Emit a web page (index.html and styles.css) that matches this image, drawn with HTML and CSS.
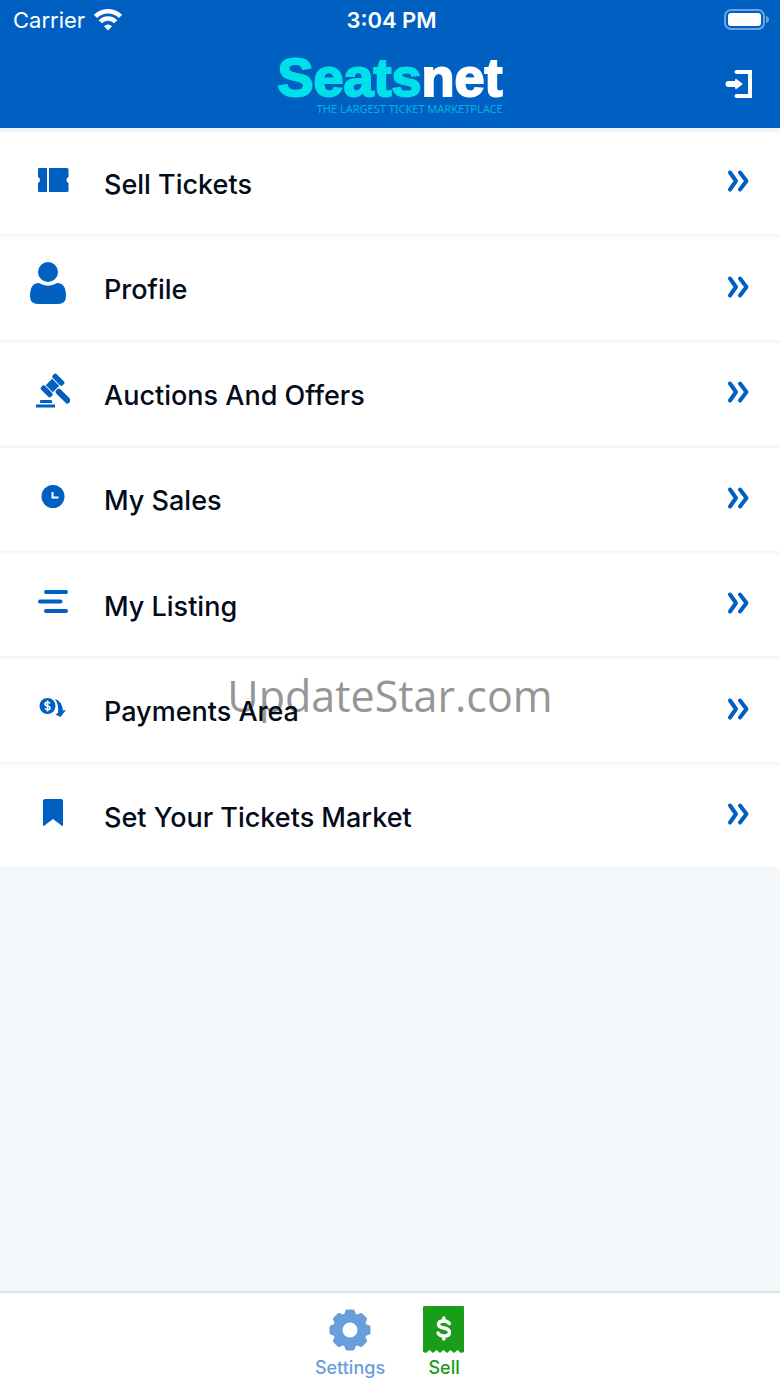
FILE: index.html
```html
<!DOCTYPE html>
<html lang="en">

<head>
    <meta charset="UTF-8">
    <meta name="viewport" content="width=device-width, initial-scale=1.0">
    <title>Seatsnet</title>
    <link rel="stylesheet" href="styles.css">
</head>

<body>
    <!-- shared arrow for the menu rows -->
    <svg class="defs" width="0" height="0">
        <symbol id="arrow" viewBox="0 0 24 24">
            <path d="M4 3.500 L10 12 L4 20.500 M14 3.500 L20.500 12 L14 20.500" fill="none" stroke="currentColor" stroke-width="4" stroke-linecap="round" stroke-linejoin="round"/>
        </symbol>
    </svg>

    <header class="header">
        <div class="status">
            <div class="carrier">
                <span>Carrier</span>
                <svg width="28" height="22" viewBox="0 0 28 22" fill="none" stroke="#fff" stroke-width="4.500">
                    <path d="M1.500 7.500 A17.500 17.500 0 0 1 26.500 7.500"/>
                    <path d="M6.300 12.700 A10.600 10.600 0 0 1 21.700 12.700"/>
                    <path d="M14 21.500 L10 17.200 A5.600 5.600 0 0 1 18 17.200 Z" fill="#fff" stroke="none"/>
                </svg>
            </div>
            <div class="time">3:04 PM</div>
            <div class="battery">
                <svg width="46" height="22" viewBox="0 0 46 22">
                    <rect x="1" y="1" width="39" height="19" rx="6" fill="none" stroke="#6ba3de" stroke-width="2"/>
                    <rect x="4" y="4" width="33" height="13" rx="3" fill="#fff"/>
                    <path d="M42 7 Q45 8 45 10.500 Q45 13 42 14 Z" fill="#6ba3de"/>
                </svg>
            </div>
        </div>
        <div class="bar">
            <div class="logo">
                <div class="name">Seats<span>net</span></div>
                <div class="slogan">THE LARGEST TICKET MARKETPLACE</div>
            </div>
            <button class="logout" aria-label="Log out">
                <svg width="28" height="30" viewBox="0 0 28 30">
                    <path d="M11.500 3 H25 V27 H11.500" fill="none" stroke="#fff" stroke-width="4" stroke-linecap="round"/>
                    <path d="M3.500 15 H11" stroke="#fff" stroke-width="6" stroke-linecap="round"/>
                    <path d="M11 11 L16.500 15 L11 19 Z" fill="#fff" stroke="#fff" stroke-width="2" stroke-linejoin="round"/>
                </svg>
            </button>
        </div>
    </header>

    <main class="main">
        <ul class="list">
            <li>
                <a href="#">
                    <span class="icon">
                        <svg width="32" height="24" viewBox="0 0 32 24">
                            <path d="M2 0 H10 V24 H2 Q1 24 1 23 V15 A3.200 3.200 0 0 0 1 9 V1 Q1 0 2 0 Z M12 0 H30 Q31.500 0 31.500 1.500 V9 A3.200 3.200 0 0 0 31.500 15 V22.500 Q31.500 24 30 24 H12 Z"/>
                        </svg>
                    </span>
                    <span class="label">Sell Tickets</span>
                    <svg class="arrow"><use href="#arrow"/></svg>
                </a>
            </li>
            <li>
                <a href="#">
                    <span class="icon profile">
                        <svg width="36" height="42" viewBox="0 0 36 42">
                            <circle cx="18" cy="10" r="10"/>
                            <path d="M9 21 Q18 26.500 27 21 Q36 21 36 34 Q36 42 28 42 H8 Q0 42 0 34 Q0 21 9 21 Z"/>
                        </svg>
                    </span>
                    <span class="label">Profile</span>
                    <svg class="arrow"><use href="#arrow"/></svg>
                </a>
            </li>
            <li>
                <a href="#">
                    <span class="icon">
                        <svg width="34" height="36" viewBox="0 0 34 36">
                            <g transform="translate(16.500 12.500) rotate(45)">
                                <rect x="-7" y="-11" width="14" height="5.500" rx="2"/>
                                <rect x="-7" y="5.500" width="14" height="5.500" rx="2"/>
                                <rect x="-5" y="-4.500" width="10" height="9"/>
                                <rect x="6" y="-3" width="18" height="6" rx="2.500"/>
                            </g>
                            <path d="M4 28 Q4 27 5 27 H15 Q16 27 16 28 V30 H4 Z M0 31.500 H19 V34.500 H0 Z"/>
                        </svg>
                    </span>
                    <span class="label">Auctions And Offers</span>
                    <svg class="arrow"><use href="#arrow"/></svg>
                </a>
            </li>
            <li>
                <a href="#">
                    <span class="icon">
                        <svg width="24" height="24" viewBox="0 0 24 24">
                            <circle cx="12" cy="11.500" r="11.500"/>
                            <path d="M11.500 7 V12.500 H17.500" fill="none" stroke="#fff" stroke-width="2"/>
                        </svg>
                    </span>
                    <span class="label">My Sales</span>
                    <svg class="arrow"><use href="#arrow"/></svg>
                </a>
            </li>
            <li>
                <a href="#">
                    <span class="icon">
                        <svg width="30" height="24" viewBox="0 0 30 24">
                            <path d="M8 2 H28 M2 11.500 H22.500 M8 21 H28" stroke="#0060c2" stroke-width="4" stroke-linecap="round"/>
                        </svg>
                    </span>
                    <span class="label">My Listing</span>
                    <svg class="arrow"><use href="#arrow"/></svg>
                </a>
            </li>
            <li>
                <div class="watermark">UpdateStar.com</div>
                <a href="#">
                    <span class="icon">
                        <svg width="28" height="20" viewBox="0 0 28 20">
                            <circle cx="8.500" cy="8" r="8"/>
                            <path d="M11 5.500 Q10 4.300 8.500 4.300 Q6 4.300 6 6 Q6 7.600 8.500 8 Q11 8.400 11 10 Q11 11.700 8.500 11.700 Q7 11.700 6 10.500 M8.500 2.500 V13.500" fill="none" stroke="#fff" stroke-width="1.600"/>
                            <path d="M16 1 Q23 3 24 12.500 L27 12 L21.500 19 L16.500 16.500 L19 15 Q20 7 16 1 Z"/>
                        </svg>
                    </span>
                    <span class="label">Payments Area</span>
                    <svg class="arrow"><use href="#arrow"/></svg>
                </a>
            </li>
            <li>
                <a href="#">
                    <span class="icon">
                        <svg width="20" height="28" viewBox="0 0 20 28">
                            <path d="M2 0 H18 Q20 0 20 2 V26 Q20 27.500 18.500 26.500 L10 20 L1.500 26.500 Q0 27.500 0 26 V2 Q0 0 2 0 Z"/>
                        </svg>
                    </span>
                    <span class="label">Set Your Tickets Market</span>
                    <svg class="arrow"><use href="#arrow"/></svg>
                </a>
            </li>
        </ul>
    </main>

    <nav class="tabs">
        <a href="#" class="tab settings">
            <svg width="42" height="48" viewBox="0 0 42 48">
                <g transform="translate(21 24)" fill="#689edb">
                    <circle r="17"/>
                    <g id="teeth">
                        <path d="M-6.500 -14 L-4.500 -19.500 Q-4 -20.500 -3 -20.500 H3 Q4 -20.500 4.500 -19.500 L6.500 -14 V14 L4.500 19.500 Q4 20.500 3 20.500 H-3 Q-4 20.500 -4.500 19.500 L-6.500 14 Z"/>
                    </g>
                    <use href="#teeth" transform="rotate(45)"/>
                    <use href="#teeth" transform="rotate(90)"/>
                    <use href="#teeth" transform="rotate(135)"/>
                    <circle r="7.500" fill="#fff"/>
                </g>
            </svg>
            <span>Settings</span>
        </a>
        <a href="#" class="tab sell">
            <svg width="42" height="48" viewBox="0 0 42 48">
                <path d="M2 0 H40 Q41 0 41 1 V46 L38 47 L34.500 44 L31 47 L27.500 44 L24 47 L20.500 44 L17 47 L13.500 44 L10 47 L6.500 44 L3 47 L0 46 V1 Q0 0 2 0 Z" fill="#199e19"/>
                <path d="M26.300 17.500 Q24.500 15 20.800 15 Q15.500 15 15.500 18.500 Q15.500 21 20.800 22 Q26.500 23 26.500 26.500 Q26.500 30 20.800 30 Q16.500 30 15 27 M20.800 12 V15 M20.800 30 V33" fill="none" stroke="#fff" stroke-width="3.500" stroke-linecap="round"/>
            </svg>
            <span>Sell</span>
        </a>
    </nav>
</body>

</html>
```
FILE: styles.css
```css
* {
    margin: 0;
    padding: 0;
    box-sizing: border-box;
    list-style: none;
}

body {
    min-height: 100vh;
    display: flex;
    flex-direction: column;
    background: #f4f8fb;
    font-family: Inter, "Liberation Sans", sans-serif;
}

a {
    text-decoration: none;
}

svg {
    display: block;
}

.defs {
    position: absolute;
}

.header {
    background: #0060c2;
    color: #fff;
    border-bottom: 4px solid #edf6fd;
}

.status {
    height: 40px;
    padding: 0 10px 0 13px;
    display: grid;
    grid-template-columns: 1fr auto 1fr;
    align-items: center;
    font-size: 22px;
}

.carrier {
    display: flex;
    align-items: center;
    gap: 9px;
}

.time {
    font-weight: 600;
}

.battery {
    justify-self: end;
}

.bar {
    height: 88px;
    padding: 0 27px;
    display: grid;
    grid-template-columns: 1fr auto 1fr;
    align-items: center;
}

.logo {
    grid-column: 2;
    text-align: right;
}

.name {
    font: bold 54px/50px "Liberation Sans", sans-serif;
    color: #00e0ea;
    -webkit-text-stroke: 2px currentColor;
}

.name span {
    color: #fff;
}

.slogan {
    font: 11px/14px "Noto Sans", sans-serif;
    color: #00b4e0;
}

.logout {
    justify-self: end;
    border: 0;
    background: none;
}

.list {
    display: flex;
    flex-direction: column;
    gap: 3px;
}

.list li {
    position: relative;
    height: 102px;
    background: #fff;
}

.list li:nth-child(even) {
    height: 103px;
}

.list a {
    position: relative;
    height: 100%;
    padding: 0 30px;
    display: flex;
    align-items: center;
    color: #0060c2;
}

.icon {
    width: 46px;
    margin-bottom: 6px;
    display: flex;
    justify-content: center;
    fill: currentColor;
}

.profile {
    justify-content: flex-start;
    margin-bottom: 12px;
}

.label {
    flex: 1;
    margin-left: 28px;
    padding-top: 2px;
    font-size: 27px;
    font-weight: 500;
    color: #020b18;
}

.arrow {
    width: 24px;
    height: 24px;
    margin-bottom: 4px;
}

.watermark {
    position: absolute;
    inset: 0;
    padding-top: 4px;
    text-align: center;
    font: 43px/66px "Open Sans", sans-serif;
    color: #969696;
}

.tabs {
    margin-top: auto;
    height: 96px;
    padding-top: 13px;
    display: flex;
    justify-content: center;
    gap: 38px;
    background: #fff;
    border-top: 2px solid #dfe4e6;
}

.tab {
    display: flex;
    flex-direction: column;
    align-items: center;
    gap: 2px;
    font-size: 18px;
    font-weight: 500;
    line-height: 24px;
}

.settings {
    color: #689edb;
}

.sell {
    color: #199e19;
}
```
